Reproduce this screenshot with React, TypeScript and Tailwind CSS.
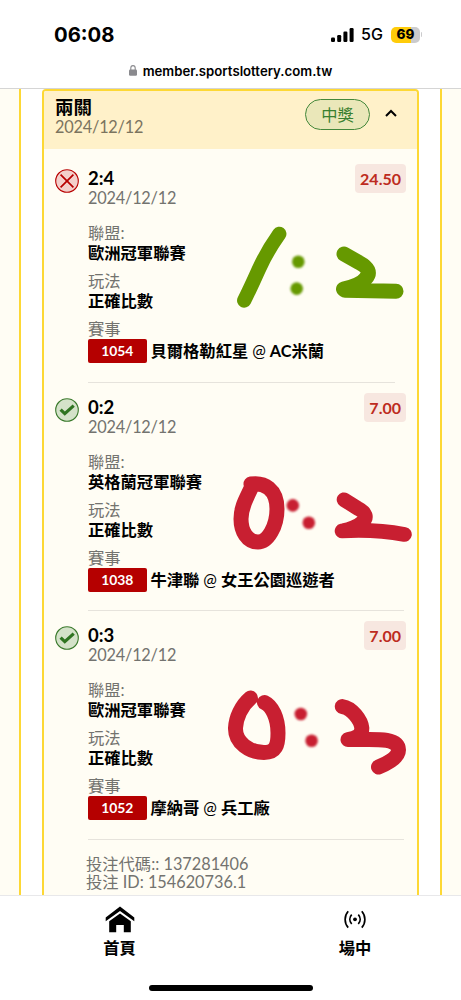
import clsx from 'clsx';

type Leg = {
  score: string;
  won: boolean;
  odds: string;
  league: string;
  code: string;
  home: string;
  away: string;
};

const legs: Leg[] = [
  { score: '2:4', won: false, odds: '24.50', league: '歐洲冠軍聯賽', code: '1054', home: '貝爾格勒紅星', away: 'AC米蘭' },
  { score: '0:2', won: true, odds: '7.00', league: '英格蘭冠軍聯賽', code: '1038', home: '牛津聯', away: '女王公園巡遊者' },
  { score: '0:3', won: true, odds: '7.00', league: '歐洲冠軍聯賽', code: '1052', home: '摩納哥', away: '兵工廠' },
];

const StatusBar = () => (
  <div className="flex h-[52px] items-start justify-between pl-[54px] pr-[39px] pt-[22px] font-['Inter',sans-serif] text-black">
    <span className="text-[20.3px] font-bold leading-[25px]">06:08</span>
    <div className="flex h-[25px] items-center">
      <svg className="h-[14px] w-[23px]" viewBox="0 0 23 14">
        <rect x="0" y="9.5" width="4" height="4.5" rx="1.2" />
        <rect x="6.2" y="7" width="4" height="7" rx="1.2" />
        <rect x="12.4" y="3.5" width="4" height="10.5" rx="1.2" />
        <rect x="18.6" y="0" width="4" height="14" rx="1.2" />
      </svg>
      <span className="ml-[7px] w-[23px] text-[16px] font-medium leading-[25px]">5G</span>
      <div className="ml-[7px] flex h-4 w-[29px] items-center justify-center rounded-[5px] bg-[linear-gradient(90deg,#ffcc0a_70%,#cbcbcd_70%)] text-[13.5px] font-extrabold">
        69
      </div>
      <span className="ml-px h-[5px] w-px rounded-r-full bg-[#cbcbcd]" />
    </div>
  </div>
);

const AddressBar = () => (
  <div className="flex h-[37px] items-center justify-center gap-1.5 border-b border-[#d5d5d5] pt-px font-['Inter',sans-serif]">
    <svg className="h-[11px] w-[8px]" viewBox="0 0 8 11">
      <rect x="0" y="4.6" width="8" height="6.2" rx="1.2" fill="#8a8a8e" />
      <path d="M1.8 5V3a2.2 2.4 0 0 1 4.4 0v2" fill="none" stroke="#8a8a8e" strokeWidth="1.1" />
    </svg>
    <span className="text-[13.2px] font-semibold leading-4 text-black">member.sportslottery.com.tw</span>
  </div>
);

const ResultIcon = ({ won }: { won: boolean }) => (
  <svg className="mt-px h-6 w-6 shrink-0" viewBox="0 0 24 24" fill="none">
    <circle cx="12" cy="12" r="11.3" fill={won ? '#d4e2c9' : '#f3cfca'} stroke={won ? '#39792b' : '#b80000'} strokeWidth="1.1" />
    {won ? (
      <path d="M5.6 11.6l4.2 4 8.9-8" stroke="#2f7421" strokeWidth="3.2" />
    ) : (
      <path d="M5.6 5.6l12.8 12.8M18.4 5.6L5.6 18.4" stroke="#b80000" strokeWidth="1.7" />
    )}
  </svg>
);

const LegRow = ({ leg, first }: { leg: Leg; first: boolean }) => (
  <div className={clsx('flex pl-[11px]', first ? 'pt-[19px]' : 'pt-[14px]')}>
    <ResultIcon won={leg.won} />
    <div className="ml-[9px] min-w-0 flex-1">
      <div className="flex justify-between pr-[11px]">
        <div>
          <p className="text-[18.5px] font-bold leading-5 text-black">{leg.score}</p>
          <p className="text-[16.3px] leading-5 tracking-[-0.2px] text-[#73736f]">2024/12/12</p>
        </div>
        <span className="-mt-1 h-[29px] rounded-[4px] bg-[#f7e7e0] px-[5px] text-[16px] font-bold leading-[29px] text-[#bd2b20]">
          {leg.odds}
        </span>
      </div>
      <dl className="mt-[15px] text-[16.3px] leading-5">
        <dt className="text-[#73736f]">聯盟:</dt>
        <dd className="font-bold text-black">{leg.league}</dd>
        <dt className="mt-2 text-[#73736f]">玩法</dt>
        <dd className="font-bold text-black">正確比數</dd>
        <dt className="mt-2 text-[#73736f]">賽事</dt>
        <dd className="flex h-6 items-center font-bold text-black">
          <span className="mr-1 h-6 w-[58.5px] rounded-[2px] bg-[#b50000] text-center text-[13.9px] leading-6 text-white">
            {leg.code}
          </span>
          <span>
            {leg.home} <span className="font-normal">@</span> {leg.away}
          </span>
        </dd>
      </dl>
      <hr className={clsx('mt-[18.5px] border-[#e6e3dc]', first ? 'mr-[22px]' : 'mr-[13px]')} />
    </div>
  </div>
);

// Hand written results on top of the ticket
const Scribbles = () => (
  <svg
    className="pointer-events-none absolute left-0 top-0 h-[1000px] w-[461px]"
    viewBox="0 0 461 1000"
    fill="none"
    strokeWidth="15"
    strokeLinecap="round"
    strokeLinejoin="round"
  >
    <g className="blur-[0.6px]" stroke="#669900">
      <path d="M279.3 233.8Q267 251 258.5 270T244.2 300.5" strokeWidth="14.3" />
      <path d="M344 254L359 262.5Q373 270 366 278Q361 285 343.5 289L345 290.3L396 291.3" />
    </g>
    <g className="blur-[0.6px]" stroke="#c81f31">
      <path d="M251 484C264 482 277 489 277 509C277 526 268 542 258 542C247 542 241 531 241 519C241 505 248 496 252 486" />
      <path d="M344 499.7L358 508.5Q370 515 362.5 522Q356 528 342 530.9Q375 529 404.5 534.5" strokeWidth="14.6" />
      <path d="M250.5 698C241 706 236 718 235.5 728C235 743 250 752.5 264 752.5C276 752.5 278 745 278 733C278 718 272 706 264.5 702.5" />
      <path d="M342.3 706.6C352 708 361 720 361.8 728C362 735 357 738 348 739.6C370 740 398 736 398.5 750C398.5 758 386 764 378.5 767" />
    </g>
    <g className="blur-[1px]" fill="#669900">
      <circle cx="298.3" cy="261.8" r="6.3" />
      <circle cx="296.7" cy="288.6" r="6.3" />
    </g>
    <g className="blur-[1px]" fill="#c81f31">
      <circle cx="292.8" cy="505.4" r="6.3" />
      <circle cx="308.8" cy="522.8" r="6.3" />
      <circle cx="300.8" cy="714" r="6.3" />
      <circle cx="311.6" cy="740.8" r="6.3" />
    </g>
  </svg>
);

const BottomNav = () => (
  <nav className="h-[105px] border-t border-[#e8e8ea] bg-white text-[16.3px] font-bold text-black">
    <div className="flex gap-[171.5px] pl-[87.5px]">
      <a className="flex w-16 flex-col items-center pt-2.5">
        <svg className="h-[27px] w-[30px]" viewBox="0 0 30 27">
          <path d="M.7 15.3V11.4L15 .6L29.3 11.4V15.3L15 5z" />
          <path d="M4.2 26.3V15.2L15 7.5L25.8 15.2V26.3H18.8V19H11.2V26.3z" />
        </svg>
        <span className="mt-[5px] leading-5">首頁</span>
      </a>
      <a className="flex w-16 flex-col items-center pt-2.5">
        <svg className="h-[27px] w-[24px]" viewBox="0 0 24 27" fill="none" stroke="#000" strokeWidth="1.7">
          <circle cx="12" cy="13.3" r="1.9" fill="#000" stroke="none" />
          <path d="M5.2 5.3C1.1 10 1.1 16.9 5.2 21.6M18.8 5.3c4.1 4.7 4.1 11.6 0 16.3M8.7 8.7c-2.5 2.7-2.5 6.6 0 9.3M15.3 8.7c2.5 2.7 2.5 6.6 0 9.3" />
        </svg>
        <span className="mt-[5px] leading-5">場中</span>
      </a>
    </div>
    <div className="mx-auto mt-[26.5px] h-[6px] w-[164px] rounded-full bg-black" />
  </nav>
);

const App = () => {
  return (
    <div className="relative flex h-[1000px] w-[461px] flex-col overflow-hidden bg-white font-['Lato','Noto_Sans_CJK_TC',sans-serif]">
      <StatusBar />
      <AddressBar />
      <main className="flex min-h-0 flex-1 overflow-hidden">
        <div className="w-[21px] shrink-0 border-r-2 border-[#fdd835] bg-[#fffdf4]" />
        <section className="mx-[21px] min-w-0 flex-1 overflow-hidden rounded-t-[4px] border-2 border-b-0 border-[#fdd835] bg-[#fffdf4]">
          <header className="flex h-[58px] items-center bg-[#fff1c9] pl-[11px] pr-5">
            <div className="-mt-1.5 flex-1">
              <h1 className="text-[18.5px] font-bold leading-5 text-black">兩關</h1>
              <p className="text-[16.3px] leading-5 tracking-[-0.2px] text-[#7b745f]">2024/12/12</p>
            </div>
            <span className="-mt-3 h-[31px] w-[65px] rounded-full border border-[#43873a] bg-[#eae7b9] text-center text-[16.3px] leading-[30px] text-[#39802f]">
              中獎
            </span>
            <svg className="-mt-3 ml-[15px] h-3 w-3" viewBox="0 0 12 12" fill="none" stroke="#000" strokeWidth="2">
              <path d="M1 8L6 3L11 8" />
            </svg>
          </header>
          {legs.map((leg, i) => (
            <LegRow key={leg.code} leg={leg} first={i === 0} />
          ))}
          <div className="mt-[15.5px] pl-[42px] text-[16.3px] leading-[17.7px] text-[#73736f]">
            <p>投注代碼:: 137281406</p>
            <p>投注 ID: 154620736.1</p>
          </div>
        </section>
        <div className="w-[21px] shrink-0 border-l-2 border-[#fdd835] bg-[#fffdf4]" />
      </main>
      <BottomNav />
      <Scribbles />
    </div>
  );
};

export default App;
